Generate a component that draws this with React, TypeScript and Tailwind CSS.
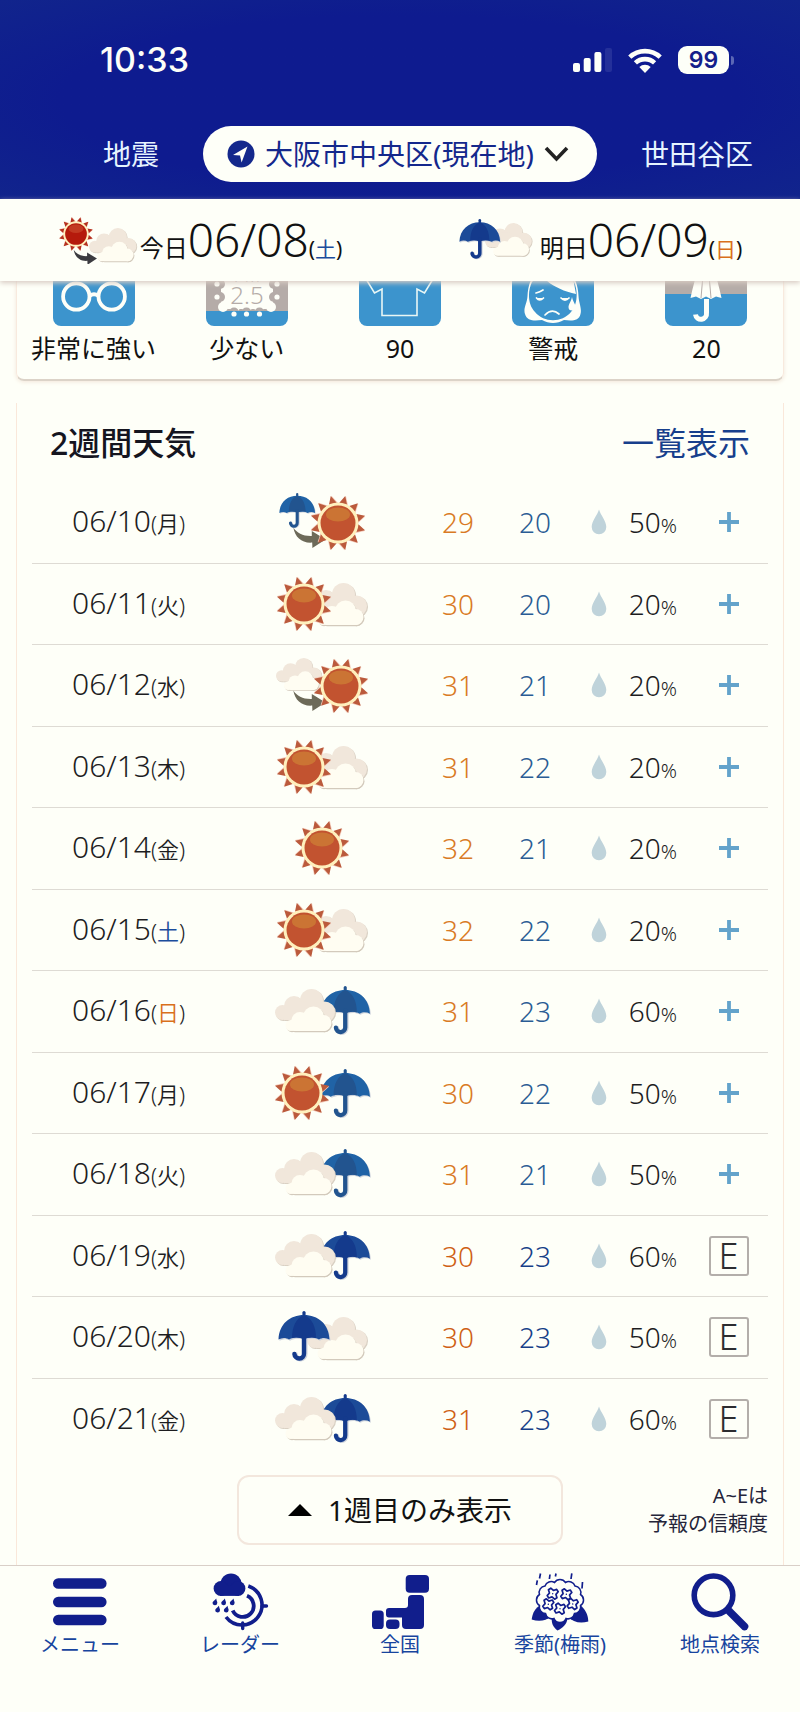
import type { ReactNode } from 'react';

type Kind =
  | 'rain-then-sun'
  | 'sun-cloud'
  | 'cloud-then-sun'
  | 'sun'
  | 'cloud-rain'
  | 'sun-rain'
  | 'rain-cloud';

type Day = {
  date: string;
  weekday: string;
  kind: Kind;
  high: number;
  low: number;
  rain: number;
  grade?: string;
};

const DAYS: Day[] = [
  { date: '06/10', weekday: '月', kind: 'rain-then-sun', high: 29, low: 20, rain: 50 },
  { date: '06/11', weekday: '火', kind: 'sun-cloud', high: 30, low: 20, rain: 20 },
  { date: '06/12', weekday: '水', kind: 'cloud-then-sun', high: 31, low: 21, rain: 20 },
  { date: '06/13', weekday: '木', kind: 'sun-cloud', high: 31, low: 22, rain: 20 },
  { date: '06/14', weekday: '金', kind: 'sun', high: 32, low: 21, rain: 20 },
  { date: '06/15', weekday: '土', kind: 'sun-cloud', high: 32, low: 22, rain: 20 },
  { date: '06/16', weekday: '日', kind: 'cloud-rain', high: 31, low: 23, rain: 60 },
  { date: '06/17', weekday: '月', kind: 'sun-rain', high: 30, low: 22, rain: 50 },
  { date: '06/18', weekday: '火', kind: 'cloud-rain', high: 31, low: 21, rain: 50 },
  { date: '06/19', weekday: '水', kind: 'cloud-rain', high: 30, low: 23, rain: 60, grade: 'E' },
  { date: '06/20', weekday: '木', kind: 'rain-cloud', high: 30, low: 23, rain: 50, grade: 'E' },
  { date: '06/21', weekday: '金', kind: 'cloud-rain', high: 31, low: 23, rain: 60, grade: 'E' },
];

const WEEKDAY_COLOR: Record<string, string> = {
  土: 'text-[#1b4c9c]',
  日: 'text-[#d9701c]',
};

const RAYS = [15, 45, 75, 105, 135, 165, 195, 225, 255, 285, 315, 345];

/* ---------- weather symbols ---------- */

function Sun({ x, y, scale = 1, red = false }: { x: number; y: number; scale?: number; red?: boolean }) {
  return (
    <g transform={`translate(${x} ${y}) scale(${scale})`}>
      {RAYS.map((a) => (
        <g key={a} transform={`rotate(${a})`}>
          <path d="M-4 -19 L0.8 -28 L5.4 -19Z" fill="#f3c9b8" />
          <path d="M-4 -20 L0 -28 L4 -20Z" fill={red ? '#b5301f' : '#bb5a3c'} />
        </g>
      ))}
      <circle r="20.5" fill="#fff0bd" />
      <circle r="17.5" fill={red ? '#b51a0c' : '#c25330'} />
      <ellipse cy="-8.5" rx="12" ry="7" fill={red ? '#c23a22' : '#cb7434'} />
    </g>
  );
}

function Cloud({ x, y, scale = 1 }: { x: number; y: number; scale?: number }) {
  const back = (
    <>
      <circle cx="7.5" cy="23.5" r="7.5" />
      <circle cx="19" cy="17" r="10" />
      <circle cx="36.5" cy="11.5" r="11.5" />
      <circle cx="49.5" cy="23" r="10.5" />
      <path d="M8 24 L20 12 L50 14 L52 32 L9 31Z" />
    </>
  );
  const front = (
    <>
      <circle cx="16" cy="36.5" r="5.5" />
      <circle cx="25" cy="31.5" r="8.5" />
      <circle cx="38.5" cy="28" r="10.5" />
      <circle cx="48.5" cy="34" r="8" />
      <rect x="14" y="30" width="40" height="12" rx="5" />
    </>
  );
  return (
    <g transform={`translate(${x} ${y}) scale(${scale})`}>
      <g fill="#d9d0c3" transform="translate(1 1)">
        {back}
      </g>
      <g fill="#f1e7db">{back}</g>
      <g fill="#d3cabc" transform="translate(1 1.2)">
        {front}
      </g>
      <g fill="#fffdf2">{front}</g>
    </g>
  );
}

const CANOPY =
  'M0.5 28.5 C1 13 12 4 26 4 C40 4 51 13 51.5 28.5 C48 26.5 44 26.5 41 28.5 C36 26 31 26 26 28 C21 26 16 26 11 28.5 C8 26.5 4 26.5 0.5 28.5Z';

function Umbrella({ x, y, scale = 1, dark = false }: { x: number; y: number; scale?: number; dark?: boolean }) {
  const side = dark ? '#1c4b98' : '#2063a6';
  const mid = dark ? '#143a8c' : '#22548f';
  return (
    <g transform={`translate(${x} ${y}) scale(${scale})`}>
      <path d={CANOPY} fill="#cfd4dc" transform="translate(1 1.2)" />
      <path d="M27.2 26 V43 a4.8 4.8 0 0 1 -9.6 0.6" fill="none" stroke="#cfd4dc" strokeWidth="4.6" strokeLinecap="round" />
      <path d="M26 1.5 V7" stroke={mid} strokeWidth="3.2" strokeLinecap="round" />
      <path d={CANOPY} fill={side} />
      <path d="M26 4 C18 7 14 16 14 27 C18 26 22 26.4 26 28 C30 26.4 34 26 38 27 C38 16 34 7 26 4Z" fill={mid} />
      <path d="M26 25 V42.5 a4.8 4.8 0 0 1 -9.6 0.4" fill="none" stroke={mid} strokeWidth="4.4" strokeLinecap="round" />
    </g>
  );
}

function Arrow({ fill = '#6d6a59' }: { fill?: string }) {
  return <path d="M23.3 37.5 C27 43 33 46.3 41.8 46 L41.8 41 L55.5 49.4 L42.4 58 L42.2 52.6 C32 53.4 25 47.5 23.3 37.5Z" fill={fill} />;
}

function WeatherIcon({ kind, dark }: { kind: Kind; dark?: boolean }) {
  return (
    <svg viewBox="0 0 104 64" className="mx-auto block h-16 w-[104px]" role="img" aria-label={kind}>
      {kind === 'sun' && <Sun x={52} y={32} />}
      {kind === 'sun-cloud' && (
        <>
          <Cloud x={37} y={11} />
          <Sun x={34} y={32} />
        </>
      )}
      {kind === 'cloud-rain' && (
        <>
          <Umbrella x={50} y={7} scale={0.97} dark={dark} />
          <Cloud x={5} y={10} />
        </>
      )}
      {kind === 'rain-cloud' && (
        <>
          <Cloud x={37} y={12} />
          <Umbrella x={8} y={6} dark={dark} />
        </>
      )}
      {kind === 'sun-rain' && (
        <>
          <Umbrella x={50} y={8} scale={0.97} dark={dark} />
          <Sun x={32} y={32} />
        </>
      )}
      {kind === 'rain-then-sun' && (
        <>
          <Arrow />
          <Umbrella x={9} y={3} scale={0.7} dark={dark} />
          <Sun x={68} y={33} />
        </>
      )}
      {kind === 'cloud-then-sun' && (
        <>
          <Cloud x={6} y={5} scale={0.76} />
          <Arrow />
          <Sun x={71} y={33} />
        </>
      )}
    </svg>
  );
}

function Drop() {
  return (
    <svg viewBox="0 0 16 26" className="ml-10 block h-[26px] w-4" aria-hidden="true">
      <path d="M8 0.5 C9.5 6 15.3 12 15.3 18 a7.3 7.3 0 0 1 -14.6 0 C0.7 12 6.5 6 8 0.5Z" fill="#bfd3da" />
    </svg>
  );
}

/* ---------- header ---------- */

function StatusBar() {
  return (
    <div className="flex items-center justify-between pt-[38px] pr-[66px] pl-[100px]">
      <span className="font-[Inter] text-[34px] leading-[44px] font-medium text-[#fdfff8]">10:33</span>
      <div className="flex items-center gap-4">
        <svg viewBox="0 0 39 24" className="h-6 w-[39px]" aria-hidden="true">
          <g fill="#fdfff8">
            <rect x="0" y="15" width="7" height="9" rx="2" />
            <rect x="10.7" y="10" width="7" height="14" rx="2" />
            <rect x="21.4" y="4" width="7" height="20" rx="2" />
          </g>
          <rect x="32" y="0" width="7" height="24" rx="2" fill="#24309a" />
        </svg>
        <svg viewBox="0 0 34 25" className="h-[25px] w-[34px]" aria-hidden="true">
          <g fill="none" stroke="#fdfff8" strokeWidth="4.6">
            <path d="M1.8 9.2 A22 22 0 0 1 32.2 9.2" />
            <path d="M7.4 14.9 A14 14 0 0 1 26.6 14.9" />
          </g>
          <path d="M17 25 L11.3 19 A8.5 8.5 0 0 1 22.7 19Z" fill="#fdfff8" />
        </svg>
        <div className="flex items-center gap-[2px]">
          <span className="flex h-7 w-[51px] items-center justify-center rounded-[9px] bg-[#fdfff8] font-[Inter] text-[23px] leading-none font-semibold text-[#14208a]">
            99
          </span>
          <span className="h-[9px] w-[3px] rounded-r-full bg-[#5b67b5]" />
        </div>
      </div>
    </div>
  );
}

function LocationTabs() {
  return (
    <div className="flex items-center pt-11 pb-[17px] text-[28px] leading-[56px] text-[#e6f4ff]">
      <a href="#quake" className="flex-1 pr-11 text-right">
        地震
      </a>
      <button
        type="button"
        className="flex h-14 items-center gap-[10px] rounded-full bg-[#fefff8] pr-7 pl-6 font-normal whitespace-nowrap text-[#14288c]"
      >
        <svg viewBox="0 0 28 28" className="h-7 w-7" aria-hidden="true">
          <circle cx="14" cy="14" r="13.5" fill="#14288c" />
          <path d="M20.5 6.5 L6 15 L13 15.4 L14.6 22.5Z" fill="#fefff8" />
        </svg>
        <span>大阪市中央区(現在地)</span>
        <svg viewBox="0 0 25 16" className="h-4 w-[25px]" aria-hidden="true">
          <path d="M2 2 L12.5 13 L23 2" fill="none" stroke="#222" strokeWidth="3.6" />
        </svg>
      </button>
      <a href="#setagaya" className="flex-1 pl-11">
        世田谷区
      </a>
    </div>
  );
}

function DayHeading({ label, date, weekday, icon }: { label: string; date: string; weekday: string; icon: ReactNode }) {
  return (
    <div className="flex flex-1 items-center justify-center gap-[2px] text-[#111]">
      {icon}
      <p className="flex items-baseline pt-2 whitespace-nowrap">
        <span className="text-2xl leading-[56px]">{label}</span>
        <span className="text-[46px] leading-[56px] font-[350]">{date}</span>
        <span className="text-[21px] leading-[56px]">
          (<span className={WEEKDAY_COLOR[weekday]}>{weekday}</span>)
        </span>
      </p>
    </div>
  );
}

/* ---------- index tiles ---------- */

const TILES: { label: string; art: ReactNode }[] = [
  {
    label: '非常に強い',
    art: (
      <g fill="none" stroke="#fefff8" strokeWidth="3.8">
        <circle cx="23.3" cy="52.5" r="13.2" />
        <circle cx="58.7" cy="52.5" r="13.2" />
        <path d="M36.5 52 Q41 48.5 45.5 52" />
      </g>
    ),
  },
  {
    label: '少ない',
    art: (
      <>
        <rect width="82" height="67" fill="#b5aca8" />
        <rect x="15" y="14" width="52" height="51" rx="7" fill="#fefff8" />
        {[17, 29, 41, 53, 65].map((x) => (
          <circle key={x} cx={x} cy="63" r="5" fill="#fefff8" />
        ))}
        {[28, 40.5, 53.5].map((x) => (
          <g key={x}>
            <circle cx={x} cy="68.5" r="5" fill="#b5aca8" />
            <path d={`M${x - 6} 67 h12 v8 h-12Z`} fill="#3c94cd" />
            <circle cx={x} cy="70" r="2.6" fill="#fefff8" />
          </g>
        ))}
        {[40, 53].map((y) => (
          <g key={y}>
            <circle cx="14" cy={y} r="5" fill="#b5aca8" />
            <circle cx="68" cy={y} r="5" fill="#b5aca8" />
            <circle cx="11" cy={y} r="2.6" fill="#fefff8" />
            <circle cx="71" cy={y} r="2.6" fill="#fefff8" />
          </g>
        ))}
        <g fill="#b5aca8" textAnchor="middle" className="font-light">
          <text x="41" y="38" fontSize="18">
            PM
          </text>
          <text x="41" y="60" fontSize="24">
            2.5
          </text>
        </g>
      </>
    ),
  },
  {
    label: '90',
    art: (
      <path
        d="M28 16 L4 30 L15.5 49 L23 45 V71.5 H58 V45 L65.5 49 L77 30 L54 16"
        fill="none"
        stroke="#e9f7f5"
        strokeWidth="1.6"
      />
    ),
  },
  {
    label: '警戒',
    art: (
      <>
        <path
          d="M41 22 C22 22 16 38 15.5 52 C15 60 11 64 13 70 C15 77 22 77 30 76 C37 80 45 80 52 76 C60 77 67 77 68.5 70 C70 64 67 60 66.5 52 C66 38 60 22 41 22Z"
          fill="#fefff8"
        />
        <path d="M20 38 C25 32 57 32 62 38 C66 46 66 60 59 68 C50 79 32 79 23 68 C15 60 16 46 20 38Z" fill="#3c94cd" />
        <path d="M31 33 C38 41 50 47 64 50 L61 34 L41 26Z" fill="#fefff8" />
        <g fill="none" stroke="#fefff8" strokeWidth="1.7" strokeLinecap="round">
          <path d="M33 71 Q40 64 47 70" />
          <path d="M24 49 Q28 48 31 46" />
          <path d="M24.5 54 Q27.5 58 31.5 54" fill="#fefff8" />
          <path d="M49 54 Q53 58 57 54" fill="#fefff8" />
        </g>
        <path d="M60 53 C61 58 63.5 60 63.5 63 a3.5 3.5 0 0 1 -7 0 C56.5 60 59 58 60 53Z" fill="#fefff8" />
      </>
    ),
  },
  {
    label: '20',
    art: (
      <>
        <rect width="82" height="50" fill="#b5aca8" />
        <path d="M37 12 H45 C50 28 54 42 56.5 54 L51 52.5 L46 55 L41 52.5 L36 55 L31 52.5 L25.5 54 C28 42 32 28 37 12Z" fill="#fefff8" />
        <path d="M38.5 25 L36 54 M43.5 25 L46 54" stroke="#b5aca8" strokeWidth="1" />
        <path d="M41.5 55 V69 a5.5 5.5 0 0 1 -11 1.5" fill="none" stroke="#fefff8" strokeWidth="5" />
      </>
    ),
  },
];

function IndexTiles() {
  return (
    <section className="mx-4 grid grid-cols-5 rounded-b-lg border-x border-b-2 border-x-[#f8eade] border-b-[#dcd3c8] shadow-[0_1px_4px_#f3e6da]">
      {TILES.map((tile) => (
        <div key={tile.label} className="flex flex-col items-center pb-[13px]">
          {/* upper half is scrolled under the date bar */}
          <div className="flex h-[45px] items-end overflow-hidden">
            <svg viewBox="0 0 82 82" className="block h-[82px] w-[82px] rounded-lg bg-[#3c94cd]" aria-hidden="true">
              {tile.art}
            </svg>
          </div>
          <p className="pt-1 text-[25px] leading-9 whitespace-nowrap text-[#111]">{tile.label}</p>
        </div>
      ))}
    </section>
  );
}

/* ---------- forecast ---------- */

function ForecastRow({ day }: { day: Day }) {
  const second = Boolean(day.grade);
  return (
    <tr className="border-b border-[#dedbd4] last:border-b-0 odd:h-[82px] even:h-[81px]">
      <th scope="row" className="pl-10 text-left text-[30px] font-[350] whitespace-nowrap">
        {day.date}
        <span className="text-[22px]">
          (<span className={WEEKDAY_COLOR[day.weekday]}>{day.weekday}</span>)
        </span>
      </th>
      <td>
        <WeatherIcon kind={day.kind} dark={second} />
      </td>
      <td className={second ? 'text-right text-[#cf5f14]' : 'text-right text-[#d97a24]'}>{day.high}</td>
      <td className={second ? 'text-right text-[#173f88]' : 'text-right text-[#2a5c94]'}>{day.low}</td>
      <td>
        <Drop />
      </td>
      <td className="text-right whitespace-nowrap">
        {day.rain}
        <span className="text-xl">%</span>
      </td>
      <td className="pl-3">
        {day.grade ? (
          <span className="mx-auto flex h-10 w-10 items-center justify-center rounded-[3px] border-2 border-[#b3aeaa] text-4xl leading-none text-[#2c2c30]">
            {day.grade}
          </span>
        ) : (
          <button type="button" aria-label={`${day.date}の詳細`} className="mx-auto block">
            <svg viewBox="0 0 20 20" className="block h-5 w-5" aria-hidden="true">
              <path d="M10 0 V20 M0 10 H20" stroke="#63a3cb" strokeWidth="3.8" />
            </svg>
          </button>
        )}
      </td>
    </tr>
  );
}

function TwoWeekForecast() {
  return (
    <section className="mx-4 mt-[22px] border-x border-[#fae8da] px-[15px] pb-5">
      <div className="flex items-center justify-between px-[18px] pt-4 pb-[14px] text-[32px] leading-[48px]">
        <h2 className="font-medium text-[#15151f]">2週間天気</h2>
        <a href="#list" className="text-[#173f8c]">
          一覧表示
        </a>
      </div>
      <table className="w-full table-fixed border-collapse text-[28px] leading-9 font-[350] text-[#1d1d1f]">
        <colgroup>
          <col />
          <col className="w-[124px]" />
          <col className="w-[90px]" />
          <col className="w-[77px]" />
          <col className="w-[68px]" />
          <col className="w-[58px]" />
          <col className="w-[91px]" />
        </colgroup>
        <tbody>
          {DAYS.map((day) => (
            <ForecastRow key={day.date} day={day} />
          ))}
        </tbody>
      </table>
      <div className="grid grid-cols-[1fr_326px_1fr] items-center pt-4">
        <button
          type="button"
          className="col-start-2 flex h-[70px] items-center justify-center gap-4 rounded-xl border-2 border-[#f3e7dd] text-[28px] text-[#111]"
        >
          <svg viewBox="0 0 24 12" className="h-3 w-6" aria-hidden="true">
            <path d="M0 12 L12 0 L24 12Z" fill="#000" />
          </svg>
          1週目のみ表示
        </button>
        <p className="text-right text-xl leading-7 text-[#25253a]">
          A~Eは
          <br />
          予報の信頼度
        </p>
      </div>
    </section>
  );
}

/* ---------- bottom navigation ---------- */

const NAVY = '#111e8c';

const DROPS = [
  [5, 32],
  [13.7, 32],
  [22.3, 32],
  [7.7, 39.3],
  [16.3, 39.3],
];

const FLORETS = [
  [22.7, 23.7],
  [36.3, 24.3],
  [18.3, 34.3],
  [42.7, 34],
  [30, 38.7],
];

// scalloped outline of the hydrangea head
const BLOSSOM =
  'M24.5 10.5 a6.5 6.5 0 0 1 11 0 a6.5 6.5 0 0 1 9.5 3.5 a6.5 6.5 0 0 1 5.5 8.5 a6.5 6.5 0 0 1 0 11 a6.5 6.5 0 0 1 -6 8 a6.5 6.5 0 0 1 -8.5 5 a6.5 6.5 0 0 1 -12 0 a6.5 6.5 0 0 1 -8.5 -5 a6.5 6.5 0 0 1 -6 -8 a6.5 6.5 0 0 1 0 -11 a6.5 6.5 0 0 1 5.5 -8.5 a6.5 6.5 0 0 1 9.5 -3.5Z';

const NAV: { label: string; href: string; art: ReactNode }[] = [
  {
    label: 'メニュー',
    href: '#menu',
    art: <path d="M8.3 13.5 H51.3 M8.3 32 H51.3 M8.3 50 H51.3" stroke={NAVY} strokeWidth="10.6" strokeLinecap="round" />,
  },
  {
    label: 'レーダー',
    href: '#radar',
    art: (
      <>
        <g fill={NAVY}>
          <circle cx="21" cy="14" r="10.6" />
          <circle cx="11" cy="18.5" r="7.4" />
          <circle cx="28" cy="18.5" r="7.4" />
          <rect x="10" y="16" width="19" height="9.9" />
        </g>
        {DROPS.map(([x, y]) => (
          <path
            key={`${x}-${y}`}
            d="M1.2 -3.6 C1.5 -1 2.5 -0.5 2.3 1 a2.4 2.4 0 0 1 -4.8 -0.3 C-2.3 -1 0 -1.8 1.2 -3.6Z"
            transform={`translate(${x} ${y})`}
            fill={NAVY}
          />
        ))}
        <g fill="none" stroke={NAVY}>
          <path d="M38.3 16 A20 20 0 1 1 16 47" strokeWidth="3.6" />
          <path d="M37 25.8 A11 11 0 1 1 22.7 40.5" strokeWidth="3.8" />
          <path d="M52 36 H56.5 M32.7 53 V58.5" strokeWidth="3.4" strokeLinecap="round" />
        </g>
      </>
    ),
  },
  {
    label: '全国',
    href: '#japan',
    art: (
      <g fill={NAVY}>
        <rect x="35.7" y="5" width="23.3" height="17.7" rx="4" />
        <path d="M42 25 H50 a4 4 0 0 1 4 4 V55 a4 4 0 0 1 -4 4 H36 a4 4 0 0 1 -4 -4 V47.5 H19 a3 3 0 0 1 -3 -3 V41 a3 3 0 0 1 3 -3 H35 a3 3 0 0 0 3 -3 V29 a4 4 0 0 1 4 -4Z" />
        <rect x="16" y="49.5" width="13.5" height="9.5" rx="4" />
        <rect x="2" y="40.5" width="11.7" height="18.5" rx="3.6" />
      </g>
    ),
  },
  {
    label: '季節(梅雨)',
    href: '#season',
    art: (
      <>
        <g fill={NAVY}>
          <path d="M11 35 C5 38 2.5 43 1.7 49.5 C9 52 16 51 21 46Z" />
          <path d="M50 35 C55 39 58 44 58.3 51.5 C50 54 43 52 38 47Z" />
          <path d="M22 47 C21 53 23 57 27.5 60.5 C33 58 37 54 37.5 48Z" />
        </g>
        <path d={BLOSSOM} transform="translate(0 2)" fill="#fefff8" stroke={NAVY} strokeWidth="1.5" />
        {FLORETS.map(([x, y]) => (
          <g key={`${x}-${y}`} transform={`translate(${x} ${y}) rotate(12)`}>
            <path
              d="M0 -3.3 L3 -5 L5 -3 L3.3 0 L5 3 L3 5 L0 3.3 L-3 5 L-5 3 L-3.3 0 L-5 -3 L-3 -5Z"
              fill="#fefff8"
              stroke={NAVY}
              strokeWidth="1.7"
              strokeLinejoin="round"
            />
            <circle r="0.7" fill={NAVY} />
          </g>
        ))}
        <path
          d="M10.5 3.5 L9.5 8.5 M7.3 10.3 L6.5 15 M20 4.5 L19.4 9 M26 3.5 L25.4 6.5 M41.8 3.3 L41 9 M52.5 12 L52 18.5"
          stroke={NAVY}
          strokeWidth="1.7"
        />
      </>
    ),
  },
  {
    label: '地点検索',
    href: '#search',
    art: (
      <g fill="none" stroke={NAVY} strokeLinecap="round">
        <circle cx="23.5" cy="25.3" r="19.3" strokeWidth="5.6" />
        <path d="M39 41 L54.5 56.5" strokeWidth="7.6" />
      </g>
    ),
  },
];

function BottomNav() {
  return (
    <nav className="grid grid-cols-5 border-t border-[#d9cfc8] bg-[#fefff8] pt-1 pb-12">
      {NAV.map((item) => (
        <a key={item.label} href={item.href} className="flex flex-col items-center text-xl leading-[30px] text-[#17449e]">
          <svg viewBox="0 0 60 60" className="block h-[60px] w-[60px] overflow-visible" aria-hidden="true">
            {item.art}
          </svg>
          <span className="whitespace-nowrap">{item.label}</span>
        </a>
      ))}
    </nav>
  );
}

export default function App() {
  return (
    <div className="min-h-screen bg-[#fefff8] font-['Noto_Sans','Noto_Sans_CJK_JP',sans-serif]">
      <header className="bg-[#0f1c8e] bg-radial from-[#0e1b8f] from-60% to-[#11248c]">
        <StatusBar />
        <LocationTabs />
      </header>

      <div className="relative flex h-[82px] items-center bg-[#fefff8] shadow-[0_2px_5px_#d8cbc3]">
        <DayHeading
          label="今日"
          date="06/08"
          weekday="土"
          icon={
            <svg viewBox="0 0 80 48" className="h-12 w-20" aria-hidden="true">
              <Cloud x={31} y={12} scale={0.79} />
              <g transform="translate(-1 7) scale(0.72)">
                <Arrow fill="#3b3b40" />
              </g>
              <Sun x={18} y={18} scale={0.62} red />
            </svg>
          }
        />
        <DayHeading
          label="明日"
          date="06/09"
          weekday="日"
          icon={
            <svg viewBox="0 0 80 48" className="h-12 w-20" aria-hidden="true">
              <Cloud x={27} y={7} scale={0.78} />
              <Umbrella x={1} y={3} scale={0.8} dark />
            </svg>
          }
        />
      </div>

      <main>
        <IndexTiles />
        <TwoWeekForecast />
      </main>
      <BottomNav />
    </div>
  );
}
